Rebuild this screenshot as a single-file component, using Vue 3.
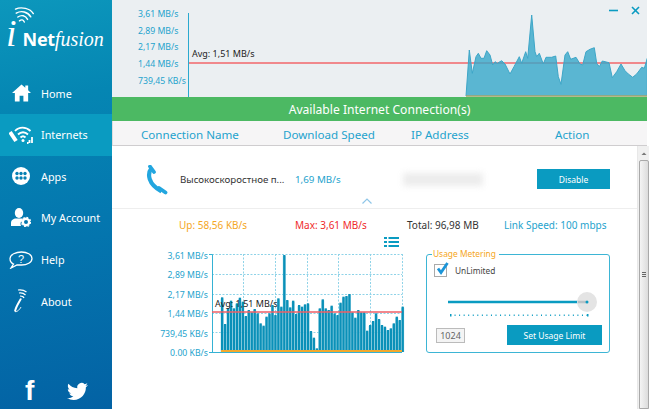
<script setup>
const nav = [
  { id: 'home', label: 'Home' },
  { id: 'net', label: 'Internets', active: true },
  { id: 'apps', label: 'Apps' },
  { id: 'acct', label: 'My Account' },
  { id: 'help', label: 'Help' },
  { id: 'about', label: 'About' },
]
const topAxis = ['3,61 MB/s', '2,89 MB/s', '2,17 MB/s', '1,44 MB/s', '739,45 KB/s']
const lowAxis = ['3,61 MB/s', '2,89 MB/s', '2,17 MB/s', '1,44 MB/s', '739,45 KB/s', '0.00 KB/s']

const z = [[78,288],[88,150],[97,220],[108,170],[115,160],[123,175],[132,175],[140,152],[150,165],[158,195],[165,185],[172,190],[185,182],[195,192],[210,222],[222,200],[238,170],[245,190],[257,155],[263,175],[275,45],[285,155],[290,170],[298,160],[310,192],[318,172],[335,172],[347,168],[355,230],[363,253],[375,165],[383,155],[392,178],[408,172],[420,192],[428,195],[438,155],[450,148],[463,143],[470,190],[478,200],[487,183],[507,188],[517,233],[530,215],[543,192],[555,212],[565,222],[578,232],[590,222],[605,202],[613,205],[622,175],[622,288]]
const area = z.map(([x, y]) => `${(440 + x / 3).toFixed(1)},${(y / 3).toFixed(1)}`).join(' ')

const tops = [187,267,220,197,220,205,188,200,243,225,232,222,235,265,272,245,235,210,240,190,215,60,195,217,197,237,210,215,208,205,288,308,340,220,193,220,225,212,235,240,203,185,183,177,232,248,225,232,232,287,270,258,235,252,270,275,285,280,265,245,255,215]
const bars = tops.map((t, i) => ({
  x: 221 + i * 2.96,
  y: 235 + t / 3,
  h: 352 - (235 + t / 3),
}))
const gridX = [212, 243, 275, 307, 338, 370, 402]
const gridY = [254, 274, 294, 313, 332, 352]
const ticks = Array.from({ length: 31 }, (_, i) => 450 + i * 4.55)
const listRows = [237, 241, 245]
</script>

<template>
  <div class="app">
    <aside class="side">
      <div class="logo">
        <svg class="logo-wifi" viewBox="0 0 24 24" width="22" height="20" fill="none" stroke="#fff" stroke-linecap="round">
          <g transform="rotate(14 12 12)">
            <path d="M1 5C7 0 18 0 23 5" stroke-width="1.700" />
            <path d="M3 9.500C8 4.500 16 4.500 21 9.500" stroke-width="1.700" />
            <path d="M6 13.500C9.500 9.500 14.500 9.500 18 13.500" stroke-width="1.700" />
            <path d="M9 17.500C11 15 13 15 15 17.500" stroke-width="1.700" />
          </g>
        </svg>
        <div class="logo-text"><span class="l-i">i</span><span class="l-net">Net</span><span class="l-f">fusion</span></div>
      </div>
      <nav class="nav">
        <a v-for="n in nav" :key="n.id" class="item" :class="{ on: n.active }">
          <span class="ico">
            <svg v-if="n.id === 'home'" viewBox="0 0 20 18" width="19" height="18" fill="#fff">
              <path d="M10 0 0 9h3v9h5v-6h4v6h5V9h3l-3-2.800V1h-3v2.500z" />
            </svg>
            <svg v-else-if="n.id === 'net'" viewBox="0 0 24 18" width="24" height="18" fill="none" stroke="#fff">
              <path d="M6 5C10 .5 17 .5 21.500 5" stroke-width="1.800" />
              <path d="M9 8.500C12 5.500 16 5.500 19 8.500" stroke-width="1.800" />
              <path d="M11.500 11.500C13 10 15 10 16.500 11.500" stroke-width="1.800" />
              <circle cx="14" cy="14.500" r="1.500" fill="#fff" stroke="none" />
              <path d="M1 6 7 15" stroke-width="4" />
              <path d="M18 17h1.500M20.500 17V14M23 17V11" stroke-width="1.800" />
            </svg>
            <svg v-else-if="n.id === 'apps'" viewBox="0 0 18 18" width="18" height="18">
              <circle cx="9" cy="9" r="9" fill="#fff" />
              <g fill="#0680b3">
                <circle cx="5" cy="6.500" r="1.700" /><circle cx="9" cy="6.500" r="1.700" /><circle cx="13" cy="6.500" r="1.700" />
                <circle cx="5" cy="11" r="1.700" /><circle cx="9" cy="11" r="1.700" /><circle cx="13" cy="11" r="1.700" />
              </g>
            </svg>
            <svg v-else-if="n.id === 'acct'" viewBox="0 0 20 19" width="20" height="19" fill="#fff">
              <ellipse cx="8" cy="5" rx="4.200" ry="5" />
              <path d="M0 18v-3c0-3 2.500-4.500 5-4.500h6c1 0 1.500.2 2 .6A5 5 0 0 0 10 18z" />
              <circle cx="15" cy="14" r="3.200" fill="none" stroke="#fff" stroke-width="2.400" />
              <circle cx="15" cy="14" r="4.600" fill="none" stroke="#fff" stroke-width="1.200" stroke-dasharray="1.800 1.800" />
            </svg>
            <svg v-else-if="n.id === 'help'" viewBox="0 0 24 18" width="24" height="18" fill="none" stroke="#fff" stroke-width="1.300">
              <path d="M12.500 1C18 1 23 3.500 23 7.500S18 14 12.500 14H8l-6 3 2.500-4C2 12 1 10 1 7.500 1 3.500 7 1 12.500 1Z" />
              <text x="12" y="12" font-size="11" fill="#fff" stroke="none" text-anchor="middle" font-family="Liberation Sans, sans-serif">?</text>
            </svg>
            <svg v-else viewBox="0 0 16 24" width="16" height="24" fill="none" stroke="#fff">
              <path d="M2 22.500C3 17 7 12 8 9.500" stroke-width="2" />
              <path d="M2 22.500C4 23.500 7 20 8 18" stroke-width="1" />
              <path d="M5 1C8 .5 11.500 1.500 13.500 3M6 4C9 3.500 11 4.500 12.500 6M7 7C9 7 10.500 7.500 11 9" stroke-width="1.200" />
            </svg>
          </span>
          <span class="lbl">{{ n.label }}</span>
        </a>
      </nav>
      <div class="social">
        <span class="fb">f</span>
        <svg viewBox="0 0 24 24" width="21" height="21" fill="#fff">
          <path d="M23.950 4.570a10 10 0 0 1-2.820.77 4.960 4.960 0 0 0 2.160-2.720c-.95.55-2 .95-3.120 1.170a4.920 4.920 0 0 0-8.380 4.480C7.690 8.090 4.070 6.130 1.640 3.160a4.820 4.820 0 0 0-.66 2.470c0 1.710.87 3.200 2.190 4.100a4.930 4.930 0 0 1-2.230-.62v.06a4.920 4.920 0 0 0 3.950 4.830c-.72.2-1.480.22-2.210.08a4.940 4.940 0 0 0 4.600 3.420 9.870 9.870 0 0 1-6.100 2.100c-.39 0-.78-.02-1.170-.07a13.900 13.900 0 0 0 7.550 2.210c9.050 0 14-7.500 14-13.980 0-.21 0-.42-.02-.63a9.940 9.940 0 0 0 2.460-2.550z" />
        </svg>
      </div>
    </aside>

    <main class="main">
      <section class="top">
        <div class="top-axis">
          <span v-for="a in topAxis" :key="a">{{ a }}</span>
        </div>
        <div class="top-chart">
          <svg viewBox="188 0 459 97" width="459" height="97">
            <line x1="188.500" y1="13" x2="188.500" y2="97" stroke="#2aa9cf" />
            <line x1="189" y1="63" x2="647" y2="63" stroke="#f2666a" stroke-width="1.400" />
            <polygon :points="area" fill="#36a8c9" fill-opacity=".8" stroke="#3da6c8" />
            <line x1="466" y1="96" x2="647" y2="96" stroke="#d9a53a" />
            <g stroke="#0a9bc1" stroke-width="1.600">
              <line x1="609" y1="10.500" x2="618" y2="10.500" />
              <line x1="632" y1="7" x2="639" y2="14" />
              <line x1="639" y1="7" x2="632" y2="14" />
            </g>
          </svg>
          <span class="top-avg">Avg: 1,51 MB/s</span>
        </div>
      </section>

      <div class="banner">Available Internet Connection(s)</div>

      <div class="heads">
        <span>Connection Name</span>
        <span>Download Speed</span>
        <span>IP Address</span>
        <span>Action</span>
      </div>

      <div class="body">
        <div class="content">
          <div class="conn">
            <svg class="phone" viewBox="0 0 22 30" width="22" height="30" fill="none" stroke="#22a6df">
              <path d="M5.500 3C1 9 2 19 15.500 26.500" stroke-width="4.200" />
              <path d="M4 1.500 8 7" stroke-width="3.800" stroke-linecap="round" />
              <path d="M13 23 19.500 27.500" stroke-width="3.800" stroke-linecap="round" />
            </svg>
            <span class="c-name">Высокоскоростное п...</span>
            <span class="c-speed">1,69 MB/s</span>
            <span class="c-ip"></span>
            <button class="btn disable">Disable</button>
            <svg class="chev" viewBox="0 0 10 6" width="10" height="6" fill="none" stroke="#8fc6e8" stroke-width="1.200">
              <path d="M.5 5.500 5 1l4.500 4.500" />
            </svg>
          </div>

          <div class="stats">
            <span class="s-up">Up: 58,56 KB/s</span>
            <span class="s-max">Max: 3,61 MB/s</span>
            <span class="s-tot">Total: 96,98 MB</span>
            <span class="s-link">Link Speed: 100 mbps</span>
          </div>

          <div class="lower">
            <div class="graph">
              <div class="low-axis">
                <span v-for="a in lowAxis" :key="a">{{ a }}</span>
              </div>
              <svg class="low-svg" viewBox="208 232 200 124" width="200" height="124">
                <g fill="#0a9bc1">
                  <rect v-for="r in listRows" :key="r" x="384" :y="r" width="3" height="2" />
                  <rect v-for="r in listRows" :key="'l' + r" x="388.500" :y="r" width="10.500" height="2" />
                </g>
                <g stroke="#8fd3e8" stroke-dasharray="2 1.500">
                  <line v-for="x in gridX.slice(1)" :key="x" :x1="x + .5" y1="254" :x2="x + .5" y2="352" />
                  <line v-for="y in gridY.slice(0, 5)" :key="y" x1="212" :y1="y + .5" x2="402" :y2="y + .5" />
                </g>
                <path d="M209 254.500h3.500V352.500H209M212 352.500H402" fill="none" stroke="#35b2d4" />
                <rect v-for="(b, i) in bars" :key="'b' + i" :x="b.x - .4" :y="b.y + 1" width="3" :height="b.h - 1" fill="#a9dbe9" />
                <rect v-for="(b, i) in bars" :key="i" :x="b.x" :y="b.y" width="2.300" :height="b.h" fill="#0a90b8" />
                <line x1="221" y1="351" x2="402" y2="351" stroke="#f3a92e" stroke-width="2" />
                <line x1="212" y1="312" x2="402" y2="312" stroke="#ee5f66" stroke-width="1.500" />
              </svg>
              <span class="low-avg">Avg: 1,51 MB/s</span>
            </div>

            <fieldset class="meter">
              <legend>Usage Metering</legend>
              <div class="check">
                <span class="box">
                  <svg viewBox="0 0 14 14" width="14" height="14" fill="none" stroke="#1c95d8" stroke-width="2.800">
                    <path d="M3 6.500 6 10.500 12.500 1" />
                  </svg>
                </span>
                <span>UnLimited</span>
              </div>
              <div class="slider">
                <svg viewBox="448 290 152 28" width="152" height="28">
                  <line x1="448" y1="302" x2="578" y2="302" stroke="#0a9bc1" stroke-width="2.500" />
                  <circle cx="587" cy="302" r="10" fill="#e4e4e4" />
                  <line x1="578" y1="302" x2="586" y2="302" stroke="#b9c2c6" stroke-width="2.500" />
                  <circle cx="587" cy="302" r="1.500" fill="#0a9bc1" />
                  <rect v-for="t in ticks" :key="t" :x="t" y="314.500" width="1" height="1.500" fill="#0a9bc1" />
                  <rect x="450" y="314" width="1.500" height="2.500" fill="#0a9bc1" />
                  <rect x="587" y="314" width="1.500" height="2.500" fill="#0a9bc1" />
                </svg>
              </div>
              <div class="set-row">
                <span class="num">1024</span>
                <button class="btn set">Set Usage Limit</button>
              </div>
            </fieldset>
          </div>
        </div>

        <div class="scroll">
          <svg viewBox="0 0 12 14" width="12" height="14"><path d="M3.500 9 6 6.500 8.500 9z" fill="#777" /></svg>
          <div class="thumb"><span></span><span></span><span></span></div>
        </div>
      </div>
    </main>
  </div>
</template>

<style>
html, body { margin: 0; padding: 0; background: #fff; }
</style>

<style scoped>
.app {
  width: 649px;
  height: 409px;
  display: flex;
  overflow: hidden;
  font-family: "Noto Sans", "Open Sans", sans-serif;
  background: #fff;
}
.side {
  width: 112px;
  flex: none;
  display: flex;
  flex-direction: column;
  color: #fff;
  background: linear-gradient(170deg, #0c97bc 0%, #0586b3 25%, #0477af 55%, #0362a4 100%);
}
.logo {
  height: 72.400px;
  box-sizing: border-box;
  padding-top: 7px;
  display: flex;
  flex-direction: column;
}
.logo-wifi { margin-left: 12px; flex: none; }
.logo-text {
  margin-top: -9px;
  padding-left: 6px;
  line-height: 30px;
  white-space: nowrap;
  display: flex;
  align-items: baseline;
}
.l-i { font: italic 400 38px/30px "Liberation Serif", serif; }
.l-net { font: 700 18px/30px "Noto Sans", sans-serif; margin-left: 6px; letter-spacing: -.3px; }
.l-f { font: italic 400 20px/30px "Liberation Serif", serif; }
.nav { display: flex; flex-direction: column; }
.item {
  height: 41.600px;
  display: flex;
  align-items: center;
}
.item.on { background: #0a9bc1; }
.ico {
  width: 41px;
  flex: none;
  display: flex;
  justify-content: center;
  padding-left: 1px;
  box-sizing: border-box;
}
.lbl { font-size: 10.800px; }
.social {
  margin-top: auto;
  height: 36px;
  display: flex;
  align-items: center;
  padding-left: 25px;
  gap: 28px;
}
.fb { font: 700 28px/1 "Liberation Sans", sans-serif; width: 14px; }
.main {
  flex: 1;
  min-width: 0;
  display: flex;
  flex-direction: column;
}
.top {
  height: 97px;
  flex: none;
  margin-right: 2px;
  background: #ebeff2;
  display: flex;
}
.top-axis {
  width: 76px;
  box-sizing: border-box;
  padding: 6px 0 0 26px;
  display: flex;
  flex-direction: column;
  color: #1ea3cd;
  font-size: 8.700px;
  line-height: 16.700px;
  white-space: nowrap;
}
.top-chart { position: relative; width: 459px; height: 97px; }
.top-chart svg { display: block; }
.top-avg {
  position: absolute;
  left: 4px;
  top: 47px;
  font-size: 9px;
  line-height: 14px;
  color: #222;
  white-space: nowrap;
}
.banner {
  height: 24px;
  flex: none;
  margin-right: 2px;
  background: #4cb963;
  color: #fff;
  font-size: 12.100px;
  line-height: 26px;
  text-align: center;
}
.heads {
  height: 25px;
  flex: none;
  margin-right: 2px;
  box-sizing: border-box;
  background: #f6f5f6;
  border-bottom: 1px solid #cfcdcf;
  border-left: 1px solid #ddd;
  color: #1ea3cd;
  font-size: 11.600px;
  line-height: 27px;
  display: grid;
  grid-template-columns: 142px 128px 144px 1fr;
  padding-left: 28px;
  white-space: nowrap;
}
.body { flex: 1; min-height: 0; display: flex; }
.content { flex: 1; min-width: 0; display: flex; flex-direction: column; }
.conn {
  height: 63px;
  flex: none;
  box-sizing: border-box;
  border-bottom: 1px solid #eeeeee;
  display: flex;
  align-items: center;
  position: relative;
  padding: 4px 0 0 34px;
}
.phone { flex: none; margin-top: 2px; }
.c-name { margin-left: 12px; font-size: 9.700px; color: #333; width: 115px; white-space: nowrap; }
.c-speed { font-size: 9.800px; color: #1ea3cd; width: 108px; white-space: nowrap; }
.c-ip {
  width: 80px;
  height: 13px;
  background: #ececec;
  filter: blur(3px);
  flex: none;
}
.btn {
  border: 0;
  padding: 0;
  background: #0a9bc1;
  color: #fff;
  font-family: inherit;
  font-size: 8.500px;
}
.disable { margin-left: 54px; width: 73px; height: 20px; flex: none; }
.chev { position: absolute; left: 250px; top: 52px; }
.stats {
  height: 32px;
  flex: none;
  display: flex;
  align-items: center;
  font-size: 10px;
  white-space: nowrap;
  box-sizing: border-box;
}
.s-up { margin-left: 67px; width: 116px; color: #f5a623; }
.s-max { width: 112px; color: #ef2a2a; }
.s-tot { width: 97px; color: #333; }
.s-link { color: #1ea3cd; }
.lower { position: relative; display: flex; }
.graph {
  width: 314px;
  height: 124px;
  flex: none;
  margin-top: -9px;
  position: relative;
  display: flex;
}
.low-axis {
  width: 96px;
  height: 124px;
  box-sizing: border-box;
  padding-top: 14.500px;
  display: flex;
  flex-direction: column;
  align-items: flex-end;
  color: #1ea3cd;
  font-size: 8.700px;
  line-height: 19.600px;
  white-space: nowrap;
}
.low-svg { display: block; flex: none; }
.low-avg {
  position: absolute;
  left: 103px;
  top: 65px;
  font-size: 9px;
  line-height: 14px;
  color: #222;
  white-space: nowrap;
}
.meter {
  margin: 7px 0 0;
  padding: 0 7px;
  width: 184px;
  height: 105px;
  box-sizing: border-box;
  border: 1px solid #3db5d5;
  border-radius: 3px;
  min-width: 0;
}
.meter legend {
  padding: 0 3px 0 1px;
  margin-left: -2px;
  color: #f5a623;
  font-size: 8.400px;
  line-height: 12px;
}
.check {
  display: flex;
  align-items: center;
  font-size: 8.300px;
  color: #444;
  height: 16px;
  gap: 8px;
  margin-top: 2px;
}
.box {
  width: 11px;
  height: 11px;
  border: 1px solid #aaa;
  position: relative;
  flex: none;
}
.box svg { position: absolute; left: 0; top: -3px; }
.slider { margin: 12px 0 0 14px; height: 28px; }
.slider svg { display: block; }
.set-row {
  display: flex;
  align-items: center;
  justify-content: space-between;
  margin-top: 7px;
  padding-left: 2px;
}
.num {
  width: 29px;
  height: 15px;
  box-sizing: border-box;
  border: 1px solid #bbb;
  background: #f4f4f4;
  color: #666;
  font-size: 9px;
  line-height: 13px;
  text-align: center;
}
.set { width: 95px; height: 20px; }
.scroll {
  width: 12px;
  flex: none;
  background: #f0f0f0;
  display: flex;
  flex-direction: column;
  align-items: center;
  border-left: 1px solid #e8e8e8;
  box-sizing: border-box;
}
.thumb {
  width: 10px;
  flex: 1;
  box-sizing: border-box;
  border: 1px solid #a9a9a9;
  border-radius: 2px 2px 0 0;
  background: linear-gradient(90deg, #f4f4f4, #dcdcdc);
  display: flex;
  flex-direction: column;
  align-items: center;
  justify-content: center;
  gap: 1px;
  padding-bottom: 20px;
}
.thumb span { width: 4px; height: 1px; background: #666; }
</style>
